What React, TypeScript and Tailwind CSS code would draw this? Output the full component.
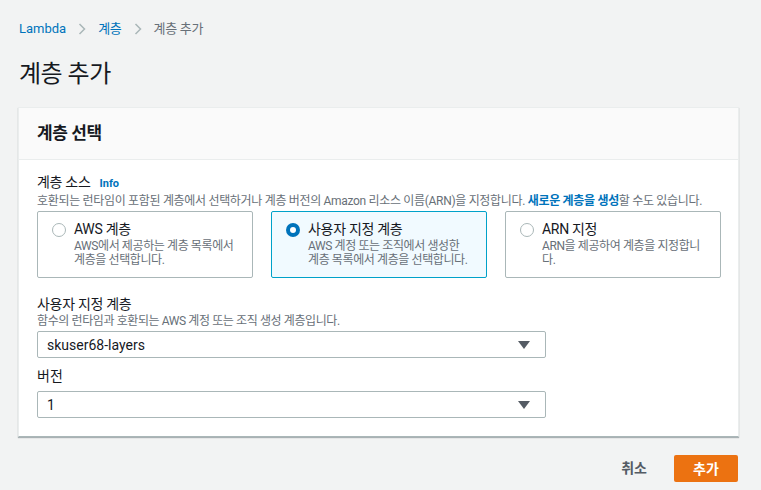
import React, { useState } from "react";

// 레이어 추가 페이지

const font = {
  fontFamily: '"Roboto", "Noto Sans CJK KR", "Noto Sans", sans-serif',
};

interface TileProps {
  title: string;
  desc: React.ReactNode;
  selected: boolean;
  onClick: () => void;
}

const Tile: React.FC<TileProps> = ({ title, desc, selected, onClick }) => (
  <div
    onClick={onClick}
    className={
      "flex-1 h-[67px] rounded-[2px] border px-[14px] pt-[7px] cursor-pointer flex gap-[8px] " +
      (selected ? "border-[#00a1c9] bg-[#f1faff]" : "border-[#aab7b8] bg-white")
    }
  >
    <div className="pt-[4px]">
      {selected ? (
        <div className="w-[14px] h-[14px] rounded-full bg-[#0073bb] flex items-center justify-center">
          <div className="w-[6px] h-[6px] rounded-full bg-white" />
        </div>
      ) : (
        <div className="w-[14px] h-[14px] rounded-full border border-[#aab7b8] bg-white" />
      )}
    </div>
    <div>
      <div className="text-[14px] leading-[20px] text-[#16191f] tracking-[-0.3px] whitespace-nowrap">{title}</div>
      <div className="text-[12px] leading-[14px] text-[#687078] tracking-[-0.4px] whitespace-nowrap">{desc}</div>
    </div>
  </div>
);

const Select: React.FC<{ value: string }> = ({ value }) => (
  <div className="w-[509px] h-[27px] border border-[#aab7b8] rounded-[2px] bg-white flex items-center justify-between pl-[9px] pr-[15px]">
    <span className="text-[14px] leading-[18px] text-[#16191f]">{value}</span>
    <svg width="12" height="8" viewBox="0 0 12 8">
      <path d="M0 0 H12 L6 8 Z" fill="#545b64" />
    </svg>
  </div>
);

export default function App() {
  const [source, setSource] = useState(1);

  return (
    <div className="w-[761px] h-[490px] bg-[#f2f3f3] overflow-hidden" style={font}>
      <div className="px-[19px] pt-[19px]">
        <div className="flex items-center text-[13px] leading-[20px]">
          <span className="text-[#0073bb]">Lambda</span>
          <svg className="mx-[12px]" width="8" height="12" viewBox="0 0 8 12">
            <path d="M1.5 1 L6.5 6 L1.5 11" fill="none" stroke="#aab7b8" strokeWidth="1.5" />
          </svg>
          <span className="text-[#0073bb] tracking-[-0.3px]">계층</span>
          <svg className="mx-[12px]" width="8" height="12" viewBox="0 0 8 12">
            <path d="M1.5 1 L6.5 6 L1.5 11" fill="none" stroke="#aab7b8" strokeWidth="1.5" />
          </svg>
          <span className="text-[#687078] tracking-[-0.3px]">계층 추가</span>
        </div>
        <h1 className="mt-[19px] text-[24px] leading-[32px] text-[#16191f] font-normal tracking-[-0.5px]">계층 추가</h1>
      </div>

      <div className="mx-[18px] mt-[17px] w-[721px] bg-white border border-[#eaeded] border-b-[#aab7b8] shadow-[0_1px_1px_rgba(0,28,36,0.3)]">
        <div className="h-[52px] bg-[#fafafa] border-b border-[#eaeded] flex items-center px-[18px]">
          <h2 className="text-[17px] font-bold text-[#16191f] tracking-[-0.4px]">계층 선택</h2>
        </div>
        <div className="px-[18px] pt-[13px] pb-[18px]">
          <div className="flex items-baseline gap-[9px] leading-[18px]">
            <span className="text-[14px] text-[#16191f] tracking-[-0.3px]">계층 소스</span>
            <span className="text-[11px] font-bold text-[#0073bb]">Info</span>
          </div>
          <div className="text-[12px] leading-[16px] text-[#687078] tracking-[-0.32px] whitespace-nowrap">
            호환되는 런타임이 포함된 계층에서 선택하거나 계층 버전의 Amazon 리소스 이름(ARN)을 지정합니다.{" "}
            <span className="text-[#0073bb] font-bold">새로운 계층을 생성</span>할 수도 있습니다.
          </div>
          <div className="mt-[2px] flex gap-[18px] w-[684px]">
            <Tile
              title="AWS 계층"
              desc={<>AWS에서 제공하는 계층 목록에서<br />계층을 선택합니다.</>}
              selected={source === 0}
              onClick={() => setSource(0)}
            />
            <Tile
              title="사용자 지정 계층"
              desc={<>AWS 계정 또는 조직에서 생성한<br />계층 목록에서 계층을 선택합니다.</>}
              selected={source === 1}
              onClick={() => setSource(1)}
            />
            <Tile
              title="ARN 지정"
              desc={<>ARN을 제공하여 계층을 지정합니<br />다.</>}
              selected={source === 2}
              onClick={() => setSource(2)}
            />
          </div>

          <div className="mt-[17px] text-[14px] leading-[18px] text-[#16191f] tracking-[-0.3px]">사용자 지정 계층</div>
          <div className="text-[12px] leading-[16px] text-[#687078] tracking-[-0.4px]">함수의 런타임과 호환되는 AWS 계정 또는 조직 생성 계층입니다.</div>
          <div className="mt-[2px]">
            <Select value="skuser68-layers" />
          </div>

          <div className="mt-[8px] text-[14px] leading-[20px] text-[#16191f]">버전</div>
          <div className="mt-[5px]">
            <Select value="1" />
          </div>
        </div>
      </div>

      <div className="flex justify-end items-center gap-[27px] pr-[23px] mt-[18px]">
        <span className="text-[14px] font-bold text-[#545b64]">취소</span>
        <button className="w-[64px] h-[27px] rounded-[2px] bg-[#ec7211] text-white text-[14px] font-bold leading-[20px]">추가</button>
      </div>
    </div>
  );
}
